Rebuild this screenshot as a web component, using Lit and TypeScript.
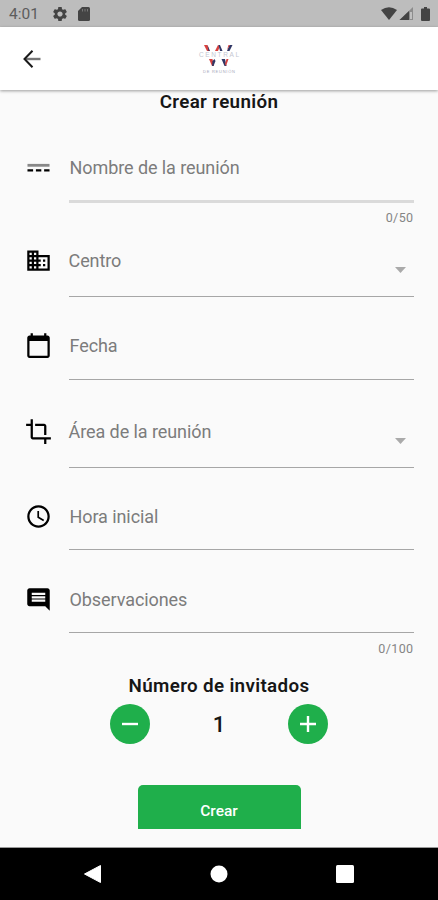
import { LitElement, html, css, svg, nothing } from "lit";
import { customElement } from "lit/decorators.js";

interface Field {
  kind: string;
  label: string;
  icon: string;
  select?: boolean;
  counter?: string;
}

const FIELDS: Field[] = [
  { kind: "name", label: "Nombre de la reunión", counter: "0/50", icon: "dashes" },
  { kind: "center", label: "Centro", select: true, icon: "building" },
  { kind: "date", label: "Fecha", icon: "calendar" },
  { kind: "area", label: "Área de la reunión", select: true, icon: "crop" },
  { kind: "hour", label: "Hora inicial", icon: "clock" },
  { kind: "notes", label: "Observaciones", counter: "0/100", icon: "comment" },
];

const ICONS: Record<string, unknown> = {
  dashes: svg`<path fill="#888" d="M2.200 8.800h19.600v2.500H2.200z"/><path d="M2.200 13.500h5v2h-5zM9.700 13.500h4.800v2H9.700zM17 13.500h4.800v2H17z"/>`,
  building: svg`<path d="M12 7V3H2v18h20V7H12zM6 19H4v-2h2v2zm0-4H4v-2h2v2zm0-4H4V9h2v2zm0-4H4V5h2v2zm4 12H8v-2h2v2zm0-4H8v-2h2v2zm0-4H8V9h2v2zm0-4H8V5h2v2zm10 12h-8v-2h2v-2h-2v-2h2v-2h-2V9h8v10zm-2-8h-2v2h2v-2zm0 4h-2v2h2v-2z"/>`,
  calendar: svg`<path d="M20 3h-1V1h-2v2H7V1H5v2H4c-1.100 0-2 .9-2 2v16c0 1.100.9 2 2 2h16c1.100 0 2-.9 2-2V5c0-1.100-.9-2-2-2zm0 18H4V8h16v13z"/>`,
  crop: svg`<path d="M17 15h2V7c0-1.100-.9-2-2-2H9v2h8v8zM7 17V1H5v4H1v2h4v10c0 1.100.9 2 2 2h10v4h2v-4h4v-2H7z"/>`,
  clock: svg`<path d="M11.990 2C6.470 2 2 6.480 2 12s4.470 10 9.990 10C17.520 22 22 17.520 22 12S17.520 2 11.990 2zM12 20c-4.420 0-8-3.580-8-8s3.580-8 8-8 8 3.580 8 8-3.580 8-8 8zm.5-13H11v6l5.250 3.150.75-1.230-4.500-2.670z"/>`,
  comment: svg`<path d="M21.990 4c0-1.100-.89-2-1.990-2H4c-1.100 0-2 .9-2 2v12c0 1.100.9 2 2 2h14l4 4-.01-18zM18 14H6v-2h12v2zm0-3H6V9h12v2zm0-3H6V6h12v2z"/>`,
};

@customElement("app-root")
export class AppRoot extends LitElement {
  static styles = css`
    :host {
      display: flex;
      flex-direction: column;
      height: 900px;
      overflow: hidden;
      background: #fafafa;
      color: #161616;
      font-family: Roboto, "Liberation Sans", sans-serif;
    }
    svg { display: block; flex: none; }
    .status {
      box-sizing: border-box;
      height: 27px;
      flex: none;
      display: flex;
      align-items: center;
      padding: 1px 8px 0 9px;
      background: #bdbdbd;
      color: #5c5c5c;
      font-size: 15.500px;
    }
    .time { width: 43px; }
    .gear { margin-right: 10px; }
    .signals { margin-left: auto; display: flex; align-items: center; gap: 8px; }
    .appbar {
      height: 63px;
      flex: none;
      display: grid;
      grid-template-columns: 80px 1fr 80px;
      align-items: center;
      background: #fff;
      box-shadow: 0 1px 3px rgba(0, 0, 0, 0.38);
      z-index: 1;
    }
    .back { margin-left: 20px; }
    .logo { justify-self: center; }
    .content { flex: 1; min-height: 0; display: flex; flex-direction: column; }
    h1, h2 {
      margin: 0;
      text-align: center;
      font-weight: 600;
      font-size: 18.800px;
      letter-spacing: 0.35px;
      line-height: 24px;
    }
    h1 { margin-bottom: 42px; }
    .field {
      display: grid;
      grid-template-columns: 24px 1fr;
      column-gap: 19px;
      margin: 0 24.500px 0 26px;
    }
    .icon { margin: -2px -1.500px -1px; }
    .body {
      display: flex;
      justify-content: space-between;
      border-bottom: 1px solid #a6a6a6;
      height: 45px;
      line-height: 24px;
      font-size: 18px;
      letter-spacing: -0.08px;
      color: #7c7c7c;
    }
    .label { margin-left: 0.500px; }
    .name .body { height: 44px; border-bottom: 3px solid #dadada; }
    .center { margin-top: 22px; }
    .center .body, .area .body { height: 47px; }
    .center .label, .area .label { margin-left: -0.500px; }
    .date { margin-top: 37px; }
    .area { margin-top: 40px; }
    .hour { margin-top: 37px; }
    .hour .body, .notes .body { height: 44px; }
    .notes { margin-top: 38px; }
    .arrow { margin: 18px 8px 0 0; }
    .counter {
      grid-column: 2;
      text-align: right;
      font-size: 12.500px;
      line-height: 24px;
      letter-spacing: 0.4px;
      color: #858585;
    }
    .name .counter { height: 21px; padding-top: 3px; }
    .notes .counter { margin-top: 4px; height: 20px; }
    h2 { margin-top: 17px; }
    .stepper {
      display: flex;
      justify-content: space-between;
      align-items: center;
      width: 218px;
      margin: 6px auto 0;
      font-size: 22px;
      font-weight: 500;
    }
    .round {
      width: 40px;
      height: 40px;
      padding: 0;
      border: 0;
      border-radius: 50%;
      display: grid;
      place-items: center;
      background: #1faf4b;
    }
    .submit {
      width: 163px;
      height: 44px;
      margin: 41px auto 0;
      padding: 7px 0 0;
      border: 0;
      border-radius: 5px 5px 0 0;
      background: #1faf4b;
      color: #fff;
      font: 500 15.500px Roboto, sans-serif;
    }
    .nav {
      height: 52px;
      flex: none;
      display: flex;
      justify-content: space-between;
      align-items: center;
      box-sizing: border-box;
      padding: 0 84px 0 82.500px;
      background: #000;
      box-shadow: 0 -1px 0 #999;
    }
  `;

  private field(f: Field) {
    return html`
      <div class="field ${f.kind}">
        <svg class="icon" width="27" height="27" viewBox="0 0 24 24">${ICONS[f.icon]}</svg>
        <div class="body">
          <span class="label">${f.label}</span>
          ${f.select
            ? html`<svg class="arrow" width="11" height="6" viewBox="0 0 11 6"><path fill="#aaa" d="M0 0h11L5.500 6z"/></svg>`
            : nothing}
        </div>
        ${f.counter ? html`<span class="counter">${f.counter}</span>` : nothing}
      </div>
    `;
  }

  render() {
    return html`
      <div class="status">
        <span class="time">4:01</span>
        <svg class="gear" width="16" height="16" viewBox="1 1 22 22">
          <path fill="#444" d="M19.140 12.940c.04-.3.060-.61.060-.94 0-.32-.02-.64-.07-.94l2.030-1.580c.18-.14.23-.41.120-.61l-1.920-3.320c-.12-.22-.37-.29-.59-.22l-2.390.96c-.5-.38-1.030-.7-1.620-.94l-.36-2.540c-.04-.24-.24-.41-.48-.41h-3.840c-.24 0-.43.170-.47.410l-.36 2.540c-.59.240-1.130.57-1.620.94l-2.390-.96c-.22-.08-.47 0-.59.220L2.740 8.870c-.12.210-.08.470.12.610l2.030 1.580c-.05.300-.09.630-.09.940s.02.640.07.940l-2.030 1.580c-.18.140-.23.410-.12.610l1.920 3.320c.12.220.37.290.59.220l2.390-.96c.5.380 1.030.7 1.620.94l.36 2.540c.05.240.24.410.48.410h3.840c.24 0 .44-.17.470-.41l.36-2.540c.59-.24 1.130-.56 1.620-.94l2.390.96c.22.080.47 0 .59-.22l1.920-3.320c.12-.22.070-.47-.12-.61l-2.010-1.580zM12 15.600c-1.980 0-3.600-1.620-3.600-3.600s1.620-3.600 3.600-3.600 3.600 1.620 3.600 3.600-1.620 3.600-3.600 3.600z"/>
        </svg>
        <svg width="12" height="14" viewBox="0 0 12 14">
          <path fill="#444" d="M4 0h6.500Q12 0 12 1.500v11Q12 14 10.500 14h-9Q0 14 0 12.500V4z"/>
          <path stroke="#777" d="M4.500 2v2.500M7 2v2.500M9.500 2v2.500"/>
        </svg>
        <div class="signals">
          <svg width="32" height="14" viewBox="0 0 32 14">
            <path fill="#444" d="M0 3Q8-2.500 16 3L8 13z"/>
            <path fill="#8c8c8c" d="M32 0v13H18.500z"/>
            <path fill="#444" d="M28 4v9h-9.500z"/>
            <path stroke="#d2d2d2" stroke-width="1.500" d="M30 5v7"/>
          </svg>
          <svg width="9" height="14" viewBox="0 0 9 14">
            <path fill="#444" d="M3 0h3v1.500h2Q9 1.500 9 2.500V13q0 1-1 1H1q-1 0-1-1V2.500q0-1 1-1h2z"/>
          </svg>
        </div>
      </div>

      <header class="appbar">
        <svg class="back" width="24" height="24" viewBox="0 0 24 24" fill="none" stroke-width="2">
          <path stroke="#777" stroke-width="2.400" d="M5 12h15.500"/>
          <path stroke="#1a1a1a" d="M12.500 3.800L4.500 12l8 8.200"/>
        </svg>
        <svg class="logo" width="44" height="36" viewBox="0 0 44 36">
          <path fill="#d8413f" d="M7 4h3.500l2 6H10z"/>
          <path fill="#303765" d="M10.500 4l2.500 6h-1.500z"/>
          <path fill="#d8413f" d="M18 10l3-6 2 1-2 5z"/>
          <path fill="#303765" d="M21.500 4H23l2.500 6H23z"/>
          <path fill="#303765" d="M32.500 4h3l-3 6h-2.500z"/>
          <path fill="#d8413f" d="M31.500 4h1.500l-3 5z"/>
          <path fill="#d8413f" d="M12 18h3.500l1.500 7h-2z"/>
          <path fill="#303765" d="M15.500 20l2-2 1 2-2 5h-1.500z"/>
          <path fill="#303765" d="M24.500 18H28l1.500 7h-2z"/>
          <path fill="#d8413f" d="M29.500 18h2l-2.500 7-1-2z"/>
          <text x="2" y="16" textLength="40" font-family="Liberation Sans" font-size="6.500" fill="#c4c7d2">CENTRAL</text>
          <text x="6" y="32" textLength="32" font-family="Liberation Sans" font-size="4" fill="#a5a8ba">DE REUNIÓN</text>
        </svg>
      </header>

      <main class="content">
        <h1>Crear reunión</h1>
        ${FIELDS.map((f) => this.field(f))}
        <h2>Número de invitados</h2>
        <div class="stepper">
          <button class="round" aria-label="Menos">
            <svg width="16" height="16" viewBox="0 0 16 16"><path stroke="#fff" stroke-width="2.400" d="M0 8h16"/></svg>
          </button>
          <span>1</span>
          <button class="round" aria-label="Más">
            <svg width="16" height="16" viewBox="0 0 16 16"><path stroke="#fff" stroke-width="2.400" d="M0 8h16M8 0v16"/></svg>
          </button>
        </div>
        <button class="submit">Crear</button>
      </main>

      <nav class="nav">
        <svg width="19" height="20" viewBox="0 0 19 20"><path fill="#fff" stroke="#fff" stroke-linejoin="round" d="M17.500 1.500v17L1.500 10z"/></svg>
        <svg width="18" height="18" viewBox="0 0 18 18"><circle cx="9" cy="9" r="8.500" fill="#fff"/></svg>
        <svg width="18" height="18" viewBox="0 0 18 18"><rect width="18" height="18" rx="1.500" fill="#fff"/></svg>
      </nav>
    `;
  }
}
